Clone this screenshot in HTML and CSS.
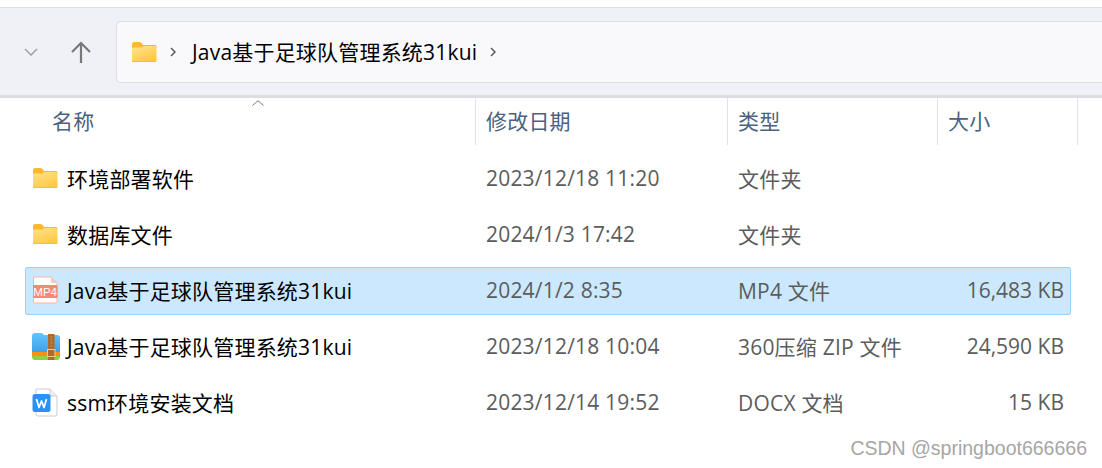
FILE: index.html
```html
<!DOCTYPE html>
<html lang="zh-CN">
<head>
<meta charset="utf-8">
<title>Java基于足球队管理系统31kui</title>
<link rel="stylesheet" href="styles.css">
</head>
<body>
<svg class="defs" width="0" height="0" aria-hidden="true">
  <defs>
    <linearGradient id="fg" x1="0" y1="0" x2="0.6" y2="1"><stop offset="0" stop-color="#ffe38f"/><stop offset="1" stop-color="#fdc945"/></linearGradient>
    <linearGradient id="zb" x1="0" y1="0" x2="0" y2="1"><stop offset="0" stop-color="#63c6fb"/><stop offset="1" stop-color="#3a9fe8"/></linearGradient>
    <symbol id="folder" viewBox="0 0 26 22">
      <path d="M1 3.500Q1 1 3 1H8.500Q10 1 11 2.500L12 4H24Q25.500 4 25.500 5.500V7H1Z" fill="#fbb92e"/>
      <path d="M1 6.500H11L12.500 5H24Q25.500 5 25.500 6.500V19.500Q25.500 21 24 21H2Q1 21 1 19.500Z" fill="url(#fg)"/>
      <path d="M1 20H25.500V19.500Q25.500 21 24 21H2Q1 21 1 19.500Z" fill="#f6bd3b"/>
    </symbol>
  </defs>
</svg>
<header class="toolbar">
  <svg class="nav-down" width="14" height="8" viewBox="0 0 14 8"><path d="M1 1L7 7L13 1" fill="none" stroke="#a3a4a8" stroke-width="1.600"/></svg>
  <svg class="nav-up" width="20" height="22" viewBox="0 0 20 22"><path d="M10 22V2M1 11L10 2L19 11" fill="none" stroke="#77787c" stroke-width="2.200"/></svg>
  <div class="address">
    <svg class="addr-folder" width="26" height="22"><use href="#folder"/></svg>
    <svg class="crumb" width="6" height="10" viewBox="0 0 6 10"><path d="M1 1L5 5L1 9" fill="none" stroke="#55565a" stroke-width="1.500"/></svg>
    <span class="addr-text">Java基于足球队管理系统31kui</span>
    <svg class="crumb crumb-end" width="6" height="10" viewBox="0 0 6 10"><path d="M1 1L5 5L1 9" fill="none" stroke="#55565a" stroke-width="1.500"/></svg>
  </div>
</header>

<div class="head">
  <svg class="sort" width="12" height="6" viewBox="0 0 12 6"><path d="M0.500 5.500L6 0.700L11.500 5.500" fill="none" stroke="#77787c" stroke-width="1"/></svg>
  <div class="th th-name">名称</div>
  <div class="th th-date">修改日期</div>
  <div class="th th-type">类型</div>
  <div class="th th-size">大小</div>
</div>

<main class="list">
  <div class="row">
    <svg class="ico" width="26" height="22"><use href="#folder"/></svg>
    <span class="name">环境部署软件</span>
    <span class="date">2023/12/18 11:20</span>
    <span class="type">文件夹</span>
    <span class="size"></span>
  </div>
  <div class="row">
    <svg class="ico" width="26" height="22"><use href="#folder"/></svg>
    <span class="name">数据库文件</span>
    <span class="date">2024/1/3 17:42</span>
    <span class="type">文件夹</span>
    <span class="size"></span>
  </div>
  <div class="row selected">
    <svg class="ico" width="26" height="28" viewBox="0 0 26 28">
      <path d="M1.500 1H19L25 7V26Q25 27 24 27H2.500Q1.500 27 1.500 26Z" fill="#fff" stroke="#f6b5a6"/>
      <path d="M19 1V7H25Z" fill="#f9c9bd"/>
      <rect x="1" y="9" width="24.500" height="13" fill="#f28a75"/>
      <text x="13.200" y="20" class="mp4-label">MP4</text>
    </svg>
    <span class="name">Java基于足球队管理系统31kui</span>
    <span class="date">2024/1/2 8:35</span>
    <span class="type">MP4 文件</span>
    <span class="size">16,483 KB</span>
  </div>
  <div class="row">
    <svg class="ico" width="28" height="27" viewBox="0 0 28 27">
      <path d="M0 3Q0 0 3 0H9Q11 0 12 2H25Q28 2 28 5V20H0Z" fill="url(#zb)"/>
      <path d="M0 19H28V23H0Z" fill="#fb8f13"/>
      <path d="M0 23H28V24Q28 27 25 27H3Q0 27 0 24Z" fill="#8fd044"/>
      <rect x="16" y="1" width="6.500" height="26" fill="#ad6a2c"/>
      <path d="M19.200 3V14" stroke="#d09a5c" stroke-width="1" stroke-dasharray="1.500 1.500"/>
      <rect x="15.500" y="16.500" width="7.500" height="7" fill="none" stroke="#eccb8c" stroke-width="1"/>
    </svg>
    <span class="name">Java基于足球队管理系统31kui</span>
    <span class="date">2023/12/18 10:04</span>
    <span class="type">360压缩 ZIP 文件</span>
    <span class="size">24,590 KB</span>
  </div>
  <div class="row">
    <svg class="ico" width="26" height="29" viewBox="0 0 26 29">
      <path d="M4 1H18L25 8V26Q25 28 23 28H6Q4 28 4 26Z" fill="#fff" stroke="#c9ccd6"/>
      <path d="M18 1V8H25" fill="#eef0f4" stroke="#c9ccd6"/>
      <rect x="0.500" y="6" width="18" height="18" rx="2.500" fill="#2a92f6"/>
      <path d="M4.500 11L7 19.500L9.500 13L12 19.500L14.500 11" fill="none" stroke="#fff" stroke-width="1.700" stroke-linejoin="round"/>
    </svg>
    <span class="name">ssm环境安装文档</span>
    <span class="date">2023/12/14 19:52</span>
    <span class="type">DOCX 文档</span>
    <span class="size">15 KB</span>
  </div>
</main>
<div class="watermark">CSDN @springboot666666</div>
</body>
</html>
```

FILE: styles.css
```css
* { box-sizing: border-box; }
html, body { margin: 0; padding: 0; }
body {
  width: 1102px;
  height: 468px;
  overflow: hidden;
  position: relative;
  background: #fff;
  font-family: "Open Sans", "Noto Sans CJK SC", sans-serif;
  font-size: 21px;
  letter-spacing: 0.200px;
  color: #000;
}
.defs { position: absolute; }
svg { display: block; flex: none; }

.toolbar {
  margin-top: 7px;
  height: 91px;
  display: flex;
  align-items: center;
  background: #f0f1f6;
  border-top: 1px solid #dfdfe3;
  border-bottom: 3px solid #dcdce1;
  padding: 1px 0 0 24px;
}
.nav-down { margin-right: 33px; }
.nav-up { margin-right: 25px; }
.address {
  width: 986px;
  height: 62px;
  flex: none;
  display: flex;
  align-items: center;
  background: #f9f9fc;
  border: 1px solid #dfdfe3;
  border-right: none;
  border-radius: 5px 0 0 5px;
  padding: 0 0 0 14px;
}
.crumb { margin-left: 13px; }
.addr-text { margin-left: 16px; position: relative; top: -1px; }
.crumb-end { margin-left: 13px; }

.head {
  position: relative;
  display: grid;
  grid-template-columns: 476px 252px 210px 140px;
  height: 47px;
}
.sort { position: absolute; left: 252px; top: 2px; }
.th {
  color: #4a6280;
  padding: 8px 0 0 10px;
  border-right: 1px solid #e2e2e6;
  line-height: 30px;
}
.th-name { padding-left: 52px; }

.list {
  display: flex;
  flex-direction: column;
  gap: 8px;
  padding: 10px 31px 0 25px;
}
.row {
  display: grid;
  grid-template-columns: 41px 419px 252px 210px 1fr;
  align-items: center;
  height: 48px;
  border: 1px solid transparent;
  border-radius: 2px;
  padding: 0 6px 2px 0;
  color: #000;
}
.row svg { margin-left: 6px; }
.selected {
  background: #cce8ff;
  border-color: #99d1ff;
}
.date, .type, .size { color: #5c5c5c; }
.size { text-align: right; letter-spacing: 0; }
.mp4-label {
  font-family: "Liberation Sans", sans-serif;
  font-size: 11.500px;
  letter-spacing: 0;
  fill: #fff;
  text-anchor: middle;
}
.watermark {
  position: absolute;
  right: 15px;
  bottom: 8px;
  font-family: "Liberation Sans", sans-serif;
  font-size: 19.500px;
  color: #a6a6a6;
  letter-spacing: 0;
}
```
